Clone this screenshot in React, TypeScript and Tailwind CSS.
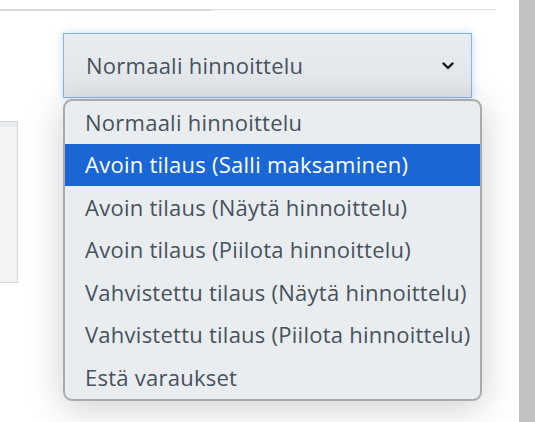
import React from "react";

const options = [
    "Normaali hinnoittelu",
    "Avoin tilaus (Salli maksaminen)",
    "Avoin tilaus (Näytä hinnoittelu)",
    "Avoin tilaus (Piilota hinnoittelu)",
    "Vahvistettu tilaus (Näytä hinnoittelu)",
    "Vahvistettu tilaus (Piilota hinnoittelu)",
    "Estä varaukset",
];

const App = () => {
    const active = 1;

    return (
        <div
            className="flex h-[422px] w-[535px] overflow-hidden bg-white"
            style={{ fontFamily: '"Open Sans", "Noto Sans", sans-serif' }}
        >
            {/* main area */}
            <div className="relative flex-1">
                {/* top rule */}
                <div className="mt-[9px] flex items-start">
                    <div className="h-[2px] w-[212px] bg-[#d9d9d9]" />
                    <div className="h-px w-[284px] bg-[#dcdcdc]" />
                </div>

                {/* select */}
                <div className="ml-[63px] mt-[22px] flex h-[65px] w-[409px] items-center justify-between border border-[#86b7ea] bg-gradient-to-b from-[#e9ecef] to-[#e3e6ea] pl-[22px] pr-[17px] text-[22px] tracking-[0.25px] text-[#46525e] shadow-[0_0_8px_rgba(120,180,240,0.45)]">
                    <span>Normaali hinnoittelu</span>
                    <svg width="12" height="8" viewBox="0 0 12 8" fill="none">
                        <path d="M1.5 1.5 6 6l4.5-4.5" stroke="#111" strokeWidth="2.4" strokeLinecap="round" strokeLinejoin="round" />
                    </svg>
                </div>

                {/* card partly hidden */}
                <div className="mt-[23px] h-[162px] w-[18px] border border-l-0 border-[#d2d7dc] bg-[#f1f3f5]">
                    <div className="h-[5px] bg-[#e8ebee]" />
                </div>

                {/* open dropdown */}
                <div className="absolute left-[63px] top-[99px] w-[419px] overflow-hidden rounded-[9px] border-2 border-[#aaaaaa] bg-[#eaedf0] text-[22px] tracking-[0.25px] text-[#46525e] shadow-[0_6px_36px_rgba(0,0,0,0.2)]">
                    {options.map((opt, i) => (
                        <div
                            key={opt}
                            className={`flex h-[42.5px] items-center whitespace-nowrap pl-[20px] ${i === active ? "bg-[#1a66d4] text-white" : ""}`}
                        >
                            {opt}
                        </div>
                    ))}
                </div>
            </div>

            {/* scrollbar */}
            <div className="w-[16px] bg-[#c1c1c1]" />
        </div>
    );
};

export default App;
